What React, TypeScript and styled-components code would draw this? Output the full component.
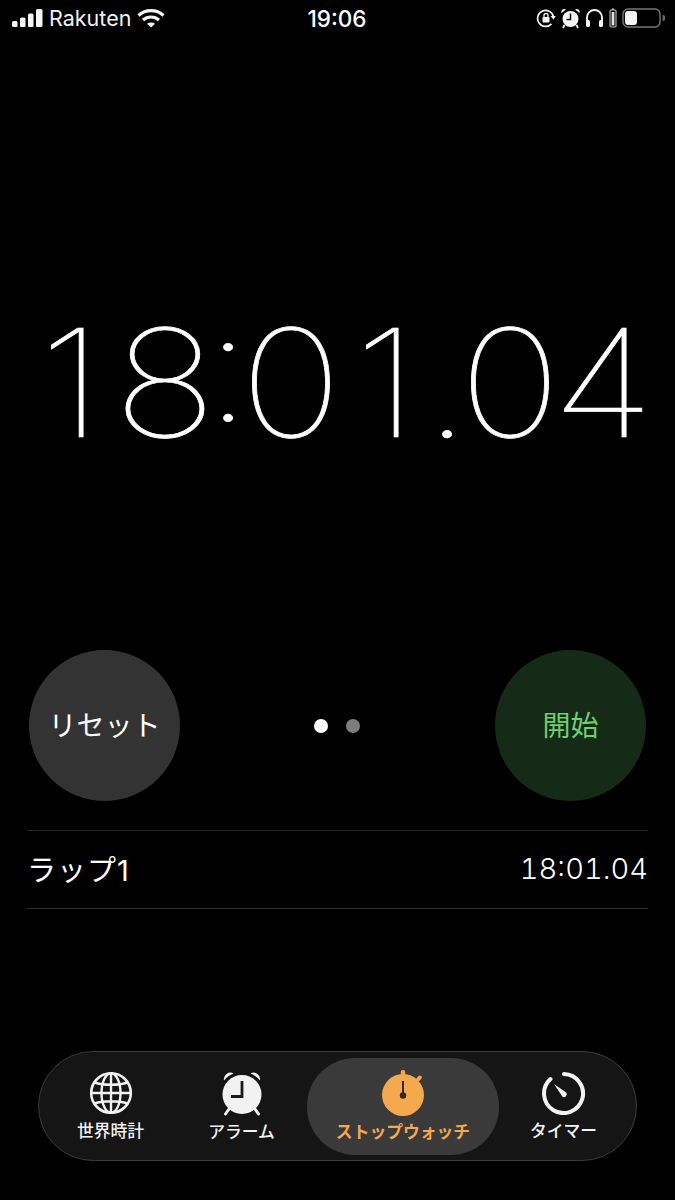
import React, { FunctionComponent } from 'react';
import styled, { createGlobalStyle } from 'styled-components';

const JP = `Inter, "Noto Sans CJK JP", sans-serif`;

const Global = createGlobalStyle`
  html, body { margin: 0; padding: 0; background: #000; }
  * { box-sizing: border-box; }
`;

const Screen_ = styled.div`
  background: #000;
  color: #fff;
  display: flex;
  flex-direction: column;
  font-family: Inter, sans-serif;
  height: 1200px;
  overflow: hidden;
  width: 675px;
`;

const StatusBar_ = styled.div`
  align-items: center;
  display: grid;
  grid-template-columns: 1fr auto 1fr;
  height: 36px;
  padding: 0 10px 0 12px;
`;

const StatusLeft_ = styled.div`
  align-items: center;
  display: flex;
  font-size: 21.5px;
  gap: 6px;
  color: #f2f2f2;
`;

const StatusRight_ = styled.div`
  align-items: center;
  display: flex;
  gap: 5px;
  justify-content: flex-end;
`;

const Clock_ = styled.div`
  font-size: 22.5px;
  font-weight: 500;
  padding-right: 3px;
`;

const TimeBlock_ = styled.div`
  align-items: center;
  display: flex;
  height: 614px;
  justify-content: center;
  padding: 80px 5px 0 0;
`;

const Glyph_ = styled.span<{ $w: number }>`
  -webkit-text-stroke: 0.7px #fff;
  display: inline-flex;
  font-family: Inter, sans-serif;
  font-feature-settings: "case" 1;
  font-size: 150px;
  font-weight: 100;
  justify-content: center;
  line-height: 1;
  transform: scaleX(1.15);
  width: ${p => p.$w}px;
`;

const Controls_ = styled.div`
  align-items: center;
  display: flex;
  justify-content: space-between;
  padding: 0 29px;
`;

const RoundButton_ = styled.div<{ $bg: string; $fg: string }>`
  align-items: center;
  background: ${p => p.$bg};
  border-radius: 50%;
  color: ${p => p.$fg};
  display: flex;
  font-family: ${JP};
  font-size: 28px;
  font-weight: 400;
  height: 151px;
  justify-content: center;
  padding-bottom: 3px;
  width: 151px;
`;

const Dots_ = styled.div`
  align-items: center;
  display: flex;
  gap: 18px;
  padding-right: 2px;
`;

const Dot_ = styled.div<{ $on?: boolean }>`
  background: ${p => (p.$on ? '#fff' : '#7d7d7d')};
  border-radius: 50%;
  height: 14px;
  width: 14px;
`;

const LapRow_ = styled.div`
  align-items: center;
  border-bottom: 1px solid #2e2e2e;
  border-top: 1px solid #262626;
  display: flex;
  font-family: ${JP};
  font-size: 29px;
  font-weight: 400;
  height: 79px;
  justify-content: space-between;
  letter-spacing: 1px;
  margin: 29px 27px 0;
  padding-bottom: 3px;
`;

const LapTime_ = styled.div`
  font-family: Inter, sans-serif;
  font-feature-settings: "case" 1, "tnum" 1;
  font-size: 29px;
  font-weight: 300;
  letter-spacing: 0;
`;

const Spacer_ = styled.div`
  flex: 1;
`;

const TabBar_ = styled.div`
  align-items: center;
  background: #151515;
  border: 1.5px solid #3a3a3a;
  border-radius: 55px;
  display: grid;
  grid-template-columns: 139px 123px 196px 1fr;
  height: 110px;
  margin: 0 38px 39px;
  padding: 0 8px 0 2px;
`;

const Tab_ = styled.div<{ $active?: boolean }>`
  align-items: center;
  background: ${p => (p.$active ? '#3a3a3a' : 'transparent')};
  border-radius: 48px;
  color: ${p => (p.$active ? '#f4a94f' : '#f2f2f2')};
  display: flex;
  flex-direction: column;
  font-family: ${JP};
  font-size: 16.8px;
  font-weight: ${p => (p.$active ? 700 : 500)};
  gap: 3px;
  height: 97px;
  justify-content: center;
  margin-left: ${p => (p.$active ? '4px' : '0')};
  white-space: nowrap;
`;

const Signal: FunctionComponent = () => (
  <svg width="31" height="20" viewBox="0 0 31 20" fill="#f5f5f5">
    <rect x="0" y="13" width="5.5" height="6" rx="1.5" />
    <rect x="8" y="9.5" width="5.5" height="9.5" rx="1.5" />
    <rect x="16" y="5.5" width="5.5" height="13.5" rx="1.5" />
    <rect x="24" y="1" width="6.5" height="18" rx="1.5" />
  </svg>
);

const Wifi: FunctionComponent = () => (
  <svg width="28" height="20" viewBox="0 0 28 20" fill="none" stroke="#f5f5f5" strokeWidth="3.2">
    <path d="M1.5 7.5 C8.5 1 19.5 1 26.5 7.5" />
    <path d="M6 12 C10.5 8 17.5 8 22 12" />
    <path d="M14 19.5 L10 15.8 C12.4 14 15.6 14 18 15.8 Z" fill="#f5f5f5" stroke="none" />
  </svg>
);

const RotationLock: FunctionComponent = () => (
  <svg width="20" height="20" viewBox="0 0 20 20" fill="none" stroke="#f5f5f5">
    <path d="M17.5 9 A8 8 0 1 0 15.5 15.8" strokeWidth="1.7" />
    <path d="M14.5 8 L19.8 8 L17.5 11.5 Z" fill="#f5f5f5" stroke="none" />
    <rect x="6.5" y="9" width="7" height="5.5" rx="1" fill="#f5f5f5" stroke="none" />
    <path d="M8 9 V7.5 a2 2 0 0 1 4 0 V9" strokeWidth="1.3" />
  </svg>
);

const SmallAlarm: FunctionComponent = () => (
  <svg width="19" height="21" viewBox="0 0 19 21">
    <circle cx="9.5" cy="11" r="8" fill="#f5f5f5" />
    <path d="M0.5 5 A3 3 0 0 1 5 1.5 Z M18.5 5 A3 3 0 0 0 14 1.5 Z" fill="#f5f5f5" />
    <path d="M9.5 5.5 V11.5 H5.5" fill="none" stroke="#111" strokeWidth="1.5" />
    <path d="M3.5 17 L2 20 M15.5 17 L17 20" stroke="#f5f5f5" strokeWidth="1.8" />
  </svg>
);

const Headphones: FunctionComponent = () => (
  <svg width="19" height="20" viewBox="0 0 19 20" fill="none">
    <path d="M2 14 V9.5 a7.5 7.5 0 0 1 15 0 V14" stroke="#f5f5f5" strokeWidth="1.9" />
    <rect x="1" y="12" width="4" height="7" rx="1.6" fill="#f5f5f5" />
    <rect x="14" y="12" width="4" height="7" rx="1.6" fill="#f5f5f5" />
  </svg>
);

const PodCase: FunctionComponent = () => (
  <svg width="8" height="20" viewBox="0 0 8 20" fill="none">
    <rect x="1" y="2" width="6" height="17" rx="1" stroke="#bdbdbd" strokeWidth="1.1" />
    <rect x="2.6" y="4" width="2.8" height="13.5" fill="#e2e2e2" />
    <rect x="3" y="0.5" width="2" height="1.5" fill="#bdbdbd" />
  </svg>
);

const Battery: FunctionComponent = () => (
  <svg width="43" height="20" viewBox="0 0 43 20" fill="none">
    <rect x="1" y="1" width="37" height="18" rx="5" stroke="#777" strokeWidth="1.4" />
    <rect x="3" y="3" width="12" height="14" rx="3" fill="#f5f5f5" />
    <path d="M40.5 7 a3 3 0 0 1 0 6 Z" fill="#666" />
  </svg>
);

const Globe: FunctionComponent = () => (
  <svg width="44" height="44" viewBox="0 0 44 44" fill="none" stroke="#f2f2f2" strokeWidth="2.4">
    <circle cx="22" cy="22" r="19.8" strokeWidth="2.6" />
    <ellipse cx="22" cy="22" rx="9.5" ry="19.8" />
    <path d="M22 2 V42 M2 22 H42 M5.5 11.5 C14 14.5 30 14.5 38.5 11.5 M5.5 32.5 C14 29.5 30 29.5 38.5 32.5" />
  </svg>
);

const AlarmClock: FunctionComponent = () => (
  <svg width="44" height="46" viewBox="0 0 44 46">
    <circle cx="22" cy="24.5" r="19.5" fill="#f2f2f2" />
    <path d="M4 10.5 A6.5 6.5 0 0 1 13.5 3.5 Q8 5.5 4 10.5 Z M40 10.5 A6.5 6.5 0 0 0 30.5 3.5 Q36 5.5 40 10.5 Z" fill="#f2f2f2" />
    <path d="M22 11 V26.5 H11" fill="none" stroke="#1a1a1a" strokeWidth="2.8" />
    <path d="M9 39 L5.5 44 M35 39 L38.5 44" stroke="#f2f2f2" strokeWidth="3" strokeLinecap="round" />
  </svg>
);

const Stopwatch: FunctionComponent = () => (
  <svg width="44" height="46" viewBox="0 0 44 46">
    <circle cx="22" cy="25" r="21" fill="#f4a94f" />
    <rect x="19.8" y="0" width="4.4" height="7" rx="2" fill="#f4a94f" />
    <path d="M37 9.5 L38.8 7.5" stroke="#f4a94f" strokeWidth="4" strokeLinecap="round" />
    <path d="M22 11 V25" stroke="#3a2810" strokeWidth="2" />
    <circle cx="22" cy="25.5" r="3.2" fill="#3a2810" />
  </svg>
);

const TimerIcon: FunctionComponent = () => (
  <svg width="44" height="44" viewBox="0 0 44 44" fill="none">
    <path d="M22 3 A19.5 19.5 0 1 1 8.5 8" stroke="#f2f2f2" strokeWidth="4" strokeLinecap="round" />
    <path d="M12 13 L24.5 21.8 A3 3 0 0 1 20.5 25.8 Z" fill="#f2f2f2" />
  </svg>
);

const time = '18:01.04';
const widths = [94, 94, 32, 94, 96, 26, 100, 86];

const tabs = [
  { label: '世界時計', icon: <Globe /> },
  { label: 'アラーム', icon: <AlarmClock /> },
  { label: 'ストップウォッチ', icon: <Stopwatch />, active: true },
  { label: 'タイマー', icon: <TimerIcon /> },
];

const App: FunctionComponent = () => (
  <Screen_>
    <Global />
    <StatusBar_>
      <StatusLeft_>
        <Signal />
        <span>Rakuten</span>
        <Wifi />
      </StatusLeft_>
      <Clock_>19:06</Clock_>
      <StatusRight_>
        <RotationLock />
        <SmallAlarm />
        <Headphones />
        <PodCase />
        <Battery />
      </StatusRight_>
    </StatusBar_>
    <TimeBlock_>
      {time.split('').map((ch, i) => (
        <Glyph_ key={`glyph-${i}`} $w={widths[i]}>{ch}</Glyph_>
      ))}
    </TimeBlock_>
    <Controls_>
      <RoundButton_ $bg="#333333" $fg="#ffffff">リセット</RoundButton_>
      <Dots_>
        <Dot_ $on />
        <Dot_ />
      </Dots_>
      <RoundButton_ $bg="#162b17" $fg="#6cd070">開始</RoundButton_>
    </Controls_>
    <LapRow_>
      <span>ラップ1</span>
      <LapTime_>18:01.04</LapTime_>
    </LapRow_>
    <Spacer_ />
    <TabBar_>
      {tabs.map(t => (
        <Tab_ key={t.label} $active={t.active}>
          {t.icon}
          <span>{t.label}</span>
        </Tab_>
      ))}
    </TabBar_>
  </Screen_>
);

export default App;
